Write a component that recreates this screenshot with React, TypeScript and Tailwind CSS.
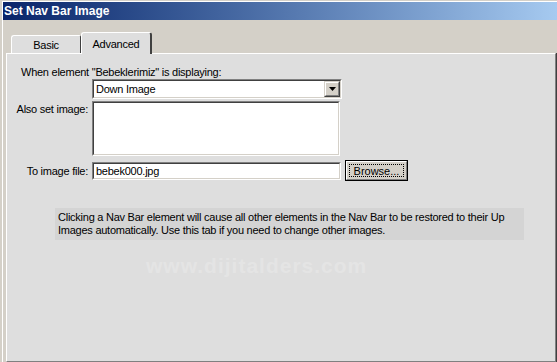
import React from "react";

function Sunken({ className, children }: { className: string; children?: React.ReactNode }) {
  return (
    <div className={`border border-t-[#808080] border-l-[#808080] border-b-white border-r-white ${className}`}>
      <div className="w-full h-full border border-t-[#404040] border-l-[#404040] border-b-[#d4d0c8] border-r-[#d4d0c8] bg-white flex">
        {children}
      </div>
    </div>
  );
}

export default function App() {
  return (
    <div className="w-[557px] h-[362px] bg-[#d4d0c8] flex flex-col overflow-hidden relative pt-[1px] pl-[2px] font-['Liberation_Sans',Arial,sans-serif] text-[11px] tracking-[-0.25px] text-black whitespace-nowrap">
      <div className="flex-1 flex flex-col border-l border-t border-white min-h-0">
        {/* title bar */}
        <div className="h-[18px] bg-gradient-to-r from-[#0a246a] to-[#a6caf0] text-white font-bold text-[12px] tracking-normal leading-[18px] pl-[1px]">
          Set Nav Bar Image
        </div>
        {/* tab strip */}
        <div className="h-[33px] flex items-end pl-[8px]">
          <div className="w-[70px] h-[18px] bg-[#dedede] border-l border-t border-white border-r border-r-[#404040] rounded-tl-[3px] rounded-tr-[2px] flex items-center justify-center pt-[1px]">
            Basic
          </div>
          <div className="relative z-10 -mb-px w-[71px] h-[22px] bg-[#dedede] border-l border-t border-white border-r-2 border-r-[#404040] rounded-tl-[3px] rounded-tr-[3px] flex justify-center pt-[3px]">
            Advanced
          </div>
        </div>
        {/* panel */}
        <div className="flex-1 ml-[3px] mr-[1px] bg-[#dedede] border-t border-l border-white border-r border-r-[#808080] border-b border-b-[#808080] shadow-[1px_0_0_#404040] flex flex-col">
          <div className="pt-[11px] pl-[14px] leading-[14px]">When element "Bebeklerimiz" is displaying:</div>
          <div className="flex">
            <div className="w-[85px]" />
            <Sunken className="w-[250px] h-[20px]">
              <div className="flex-1 pl-[2px] pt-[1px] leading-[15px]">Down Image</div>
              <div className="w-[16px] h-[16px] bg-[#d4d0c8] border border-t-[#d4d0c8] border-l-[#d4d0c8] border-b-[#404040] border-r-[#404040]">
                <div className="w-full h-full border border-t-white border-l-white border-b-[#808080] border-r-[#808080] flex items-center justify-center">
                  <svg width="7" height="4" viewBox="0 0 7 4">
                    <polygon points="0,0 7,0 3.5,4" fill="#000" />
                  </svg>
                </div>
              </div>
            </Sunken>
          </div>
          <div className="flex mt-[2px]">
            <div className="w-[85px] text-right pr-[4px] pt-[1px] leading-[14px]">Also set image:</div>
            <Sunken className="w-[248px] h-[55px]" />
          </div>
          <div className="flex items-center mt-[4px]">
            <div className="w-[85px] text-right pr-[4px] leading-[14px]">To image file:</div>
            <Sunken className="w-[249px] h-[18px]">
              <div className="pl-[2px] leading-[14px]">bebek000.jpg</div>
            </Sunken>
            <div className="ml-[4px] w-[63px] h-[21px] border border-black bg-[#d4d0c8]">
              <div className="w-full h-full border border-t-white border-l-white border-b-[#808080] border-r-[#808080] p-[2px]">
                <div className="w-full h-full border border-dotted border-black flex items-center justify-center leading-[12px] tracking-normal">
                  Browse...
                </div>
              </div>
            </div>
          </div>
          <div className="mt-[27px] ml-[48px] w-[469px] bg-[#d4d4d4] pl-[3px] pt-[3px] pb-[3px] leading-[13px]">
            Clicking a Nav Bar element will cause all other elements in the Nav Bar to be restored to their Up
            <br />
            Images automatically. Use this tab if you need to change other images.
          </div>
        </div>
      </div>
      <div className="absolute left-[146px] top-[254px] text-[21px] font-bold tracking-[1px] text-white opacity-20 leading-[24px] pointer-events-none">
        www.dijitalders.com
      </div>
    </div>
  );
}
